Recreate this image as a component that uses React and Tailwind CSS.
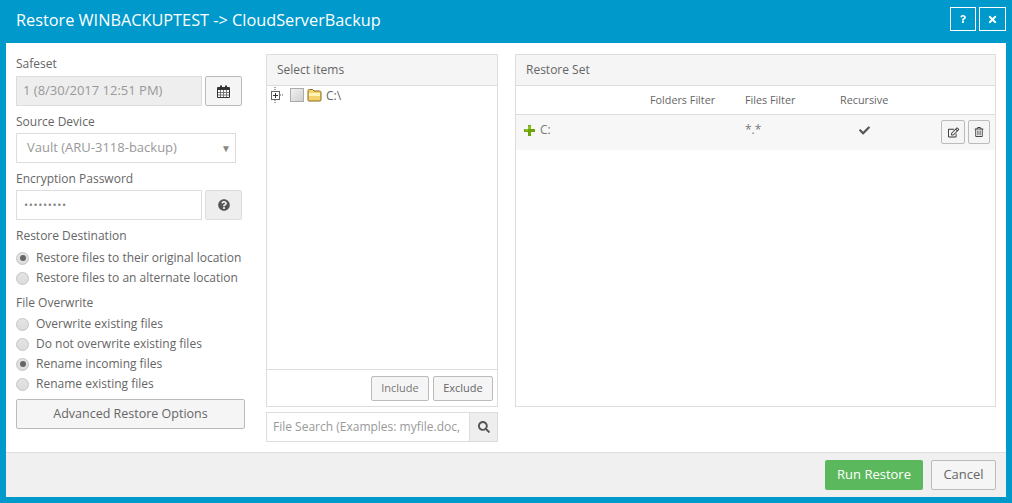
import { FaCheck, FaQuestion, FaQuestionCircle, FaRegEdit, FaRegTrashAlt, FaSearch, FaTimes } from "react-icons/fa";

function Radio({ label, checked }) {
  return (
    <div className="flex items-center h-5 text-[12px] text-[#666]">
      <span className="w-[13px] h-[13px] rounded-full border border-[#c4c4c4] bg-gradient-to-b from-[#e4e4e4] to-[#dcdcdc] flex items-center justify-center mr-[7px] shrink-0">
        {checked && <span className="w-[6px] h-[6px] rounded-full bg-[#666]" />}
      </span>
      {label}
    </div>
  );
}

function TreeToggle() {
  return (
    <svg width="14" height="16" viewBox="0 0 14 16" className="shrink-0">
      <path d="M5 0v3M10 8h4" stroke="#555" strokeDasharray="1 1" fill="none" />
      <rect x="1.5" y="4.5" width="8" height="8" fill="#fff" stroke="#666" />
      <path d="M3 8.5h5M5.5 6v5" stroke="#333" fill="none" />
      <path d="M5 13v3" stroke="#555" strokeDasharray="1 1" fill="none" />
    </svg>
  );
}

function Folder() {
  return (
    <svg width="15" height="14" viewBox="0 0 15 14" className="shrink-0">
      <path d="M1 3c0-1 .5-1.500 1.500-1.500h3L7 3h5.500c1 0 1.500.5 1.500 1.500V12c0 .6-.4 1-1 1H2c-.6 0-1-.4-1-1z" fill="#f5d36a" stroke="#8a6a1c" />
      <path d="M2 5h11v3H2z" fill="#fff3b8" />
    </svg>
  );
}

function GreenPlus() {
  return (
    <svg width="11" height="11" viewBox="0 0 11 11" className="shrink-0">
      <path d="M4 0h3v4h4v3H7v4H4V7H0V4h4z" fill="#6fa30a" />
      <path d="M4 1h3v3H4zM1 4h3v2H1z" fill="#8cc21f" />
    </svg>
  );
}

function CalendarIcon() {
  return (
    <svg width="13" height="13" viewBox="0 0 13 13">
      <path d="M0.500 2.500h12v10h-12z" fill="#fff" stroke="#333" />
      <path d="M1 3h11v2H1z" fill="#333" />
      <path d="M3 0.500h2v3H3zM8 0.500h2v3H8z" fill="#333" />
      <path d="M1 7.500h11M1 10h11M3.500 5v7M6.500 5v7M9.500 5v7" stroke="#777" fill="none" />
    </svg>
  );
}

export default function App() {
  return (
    <div className="w-[1012px] h-[503px] bg-[#0099cc] px-[6px] pb-[6px] flex flex-col overflow-hidden font-['Open_Sans',sans-serif]">
      <div className="h-[43px] shrink-0 flex items-center justify-between pl-[10px] text-white">
        <h1 className="text-[16.3px] pb-[2px]">Restore WINBACKUPTEST -&gt; CloudServerBackup</h1>
        <div className="flex gap-[3px] pb-[5px]">
          <button className="w-[26px] h-[24px] border border-white flex items-center justify-center"><FaQuestion className="text-[8px]" /></button>
          <button className="w-[27px] h-[24px] border border-white flex items-center justify-center"><FaTimes className="text-[11px]" /></button>
        </div>
      </div>

      <div className="h-[409px] bg-white flex shrink-0 pl-[10px] pt-[11px]">
        <div className="w-[229px] shrink-0 text-[12px] text-[#666]">
          <div className="h-[22px] leading-[20px]">Safeset</div>
          <div className="flex gap-[3px]">
            <div className="w-[186px] h-[30px] bg-[#eee] border border-[#ddd] flex items-center px-[6px] text-[13px] text-[#999]">1 (8/30/2017 12:51 PM)</div>
            <button className="w-[37px] h-[30px] bg-[#f5f5f5] border border-[#bbb] rounded-[2px] flex items-center justify-center"><CalendarIcon /></button>
          </div>
          <div className="h-[27px] leading-[31px]">Source Device</div>
          <div className="w-[220px] h-[30px] border border-[#ddd] flex items-center justify-between pl-[10px] pr-[4px] text-[#999] text-[13px]">
            Vault (ARU-3118-backup)
            <span className="text-[10px] text-[#888]">▼</span>
          </div>
          <div className="h-[27px] leading-[31px]">Encryption Password</div>
          <div className="flex gap-[3px]">
            <div className="w-[186px] h-[30px] border border-[#ddd] flex items-center px-[7px] text-[#888] text-[11px] tracking-[0.6px]">•••••••••</div>
            <button className="w-[37px] h-[30px] bg-[#eee] border border-[#ddd] rounded-[2px] flex items-center justify-center text-[#555]"><FaQuestionCircle className="text-[12px]" /></button>
          </div>
          <div className="h-[25px] leading-[31px] mb-[3px]">Restore Destination</div>
          <Radio label="Restore files to their original location" checked />
          <Radio label="Restore files to an alternate location" />
          <div className="h-[25px] leading-[30px]">File Overwrite</div>
          <div className="h-[1px]" />
          <Radio label="Overwrite existing files" />
          <Radio label="Do not overwrite existing files" />
          <Radio label="Rename incoming files" checked />
          <Radio label="Rename existing files" />
          <button className="w-[229px] h-[30px] mt-[5px] pt-[1px] bg-[#f5f5f5] border border-[#bbb] rounded-[2px] text-[12.500px] text-[#666]">Advanced Restore Options</button>
        </div>

        <div className="w-[232px] ml-[21px] shrink-0 flex flex-col">
          <div className="h-[353px] border border-[#ddd] flex flex-col">
            <div className="h-[31px] bg-[#f5f5f5] border-b border-[#ddd] flex items-center px-[10px] text-[12px] text-[#666]">Select items</div>
            <div className="flex-1 flex items-start pl-[3px] pt-[1px] text-[12px] text-[#666]">
              <div className="flex items-center h-[16px]">
                <TreeToggle />
                <span className="w-[14px] h-[14px] ml-[6px] border border-[#aaa] bg-gradient-to-br from-[#f2f2f2] to-[#cfcfcf] shrink-0" />
                <span className="ml-[3px]"><Folder /></span>
                <span className="ml-[4px] pt-[1px]">C:\</span>
              </div>
            </div>
            <div className="h-[37px] border-t border-[#ddd] flex items-center justify-end gap-[4px] pr-[4px] text-[11px] text-[#666]">
              <button className="w-[58px] h-[25px] bg-[#f5f5f5] border border-[#bbb] rounded-[2px] text-[#777]">Include</button>
              <button className="w-[60px] h-[25px] bg-[#f5f5f5] border border-[#bbb] rounded-[2px]">Exclude</button>
            </div>
          </div>
          <div className="h-[30px] mt-[5px] border border-[#ddd] flex items-stretch text-[12px]">
            <div className="flex-1 overflow-hidden whitespace-nowrap flex items-center pl-[6px] text-[#999]">File Search (Examples: myfile.doc,</div>
            <button className="w-[28px] bg-[#eee] border-l border-[#ddd] flex items-center justify-center text-[#555]"><FaSearch className="text-[12px]" /></button>
          </div>
        </div>

        <div className="w-[481px] ml-[17px] h-[353px] shrink-0 border border-[#ddd] flex flex-col text-[10.800px] text-[#666]">
          <div className="h-[31px] bg-[#f5f5f5] border-b border-[#ddd] flex items-center px-[10px] text-[12px]">Restore Set</div>
          <div className="h-[29px] border-b border-[#ddd] grid grid-cols-[134px_95px_95px_70px] items-center">
            <span />
            <span>Folders Filter</span>
            <span>Files Filter</span>
            <span>Recursive</span>
          </div>
          <div className="h-[35px] bg-[#f7f7f7] flex items-center">
            <div className="w-[229px] flex items-center pl-[8px] pb-[5px] text-[12px] text-[#777]">
              <GreenPlus />
              <span className="ml-[5px]">C:</span>
            </div>
            <span className="w-[114px] pb-[5px] text-[12px] text-[#777]">*.*</span>
            <span className="pb-[5px]"><FaCheck className="text-[11px] text-[#555]" /></span>
            <div className="ml-auto flex gap-[3px] pr-[5px] pb-[1px]">
              <button className="w-[24px] h-[24px] bg-[#f5f5f5] border border-[#bbb] rounded-[2px] flex items-center justify-center text-[#333]"><FaRegEdit className="text-[11px]" /></button>
              <button className="w-[22px] h-[24px] bg-[#f5f5f5] border border-[#bbb] rounded-[2px] flex items-center justify-center text-[#444]"><FaRegTrashAlt className="text-[10px]" /></button>
            </div>
          </div>
        </div>
      </div>

      <div className="flex-1 bg-[#f0f0f0] border-t border-[#ddd] flex items-center justify-end gap-[8px] pr-[10px]">
        <button className="w-[98px] h-[30px] bg-[#5cb85c] rounded-[2px] text-white text-[13px]">Run Restore</button>
        <button className="w-[65px] h-[30px] bg-[#f5f5f5] border border-[#bbb] rounded-[2px] text-[#666] text-[13px]">Cancel</button>
      </div>
    </div>
  );
}
